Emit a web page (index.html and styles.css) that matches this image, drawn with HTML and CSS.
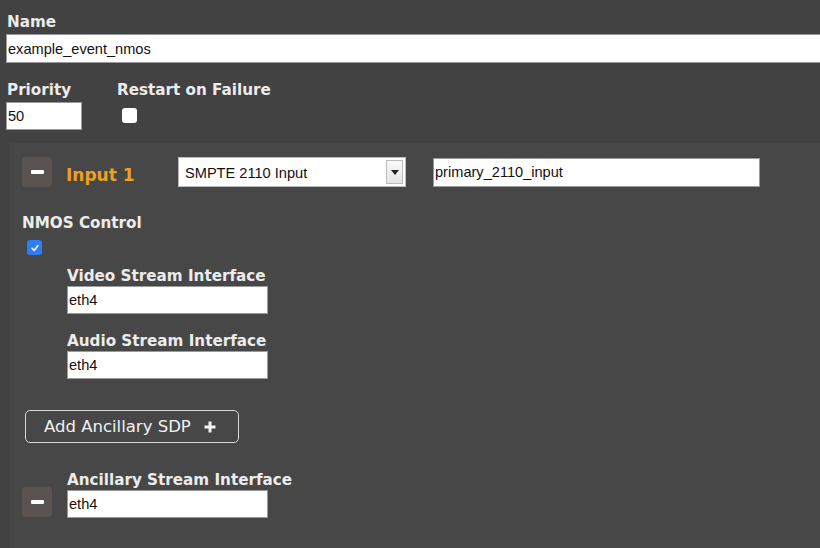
FILE: index.html
```html
<!DOCTYPE html>
<html>
<head>
<meta charset="utf-8">
<link rel="stylesheet" href="styles.css">
</head>
<body>
<div class="page">
  <div class="field">
    <label class="lbl">Name</label>
    <input class="txt name-input" type="text" value="example_event_nmos">
  </div>
  <div class="row2">
    <div class="field">
      <label class="lbl">Priority</label>
      <input class="txt prio-input" type="text" value="50">
    </div>
    <div class="field restart">
      <label class="lbl">Restart on Failure</label>
      <span class="cb"></span>
    </div>
  </div>
  <div class="panel">
    <div class="input-head">
      <button class="minus"><span></span></button>
      <span class="input-title">Input 1</span>
      <div class="select"><span class="sel-text">SMPTE 2110 Input</span><span class="sel-arrow"><svg width="8" height="5" viewBox="0 0 8 5"><path d="M0 0H8L4 5Z" fill="#222"/></svg></span></div>
      <input class="txt id-input" type="text" value="primary_2110_input">
    </div>
    <div class="nmos">
      <label class="lbl">NMOS Control</label>
      <span class="cb checked"><svg width="10" height="10" viewBox="0 0 10 10"><path d="M2 5.2L4.2 7.4L8 2.6" fill="none" stroke="#fff" stroke-width="1.6" stroke-linecap="round" stroke-linejoin="round"/></svg></span>
    </div>
    <div class="sub">
      <div class="field">
        <label class="lbl">Video Stream Interface</label>
        <input class="txt iface" type="text" value="eth4">
      </div>
      <div class="field">
        <label class="lbl">Audio Stream Interface</label>
        <input class="txt iface" type="text" value="eth4">
      </div>
    </div>
    <button class="add-btn">Add Ancillary SDP <svg class="plus" width="12" height="12" viewBox="0 0 12 12"><path d="M6 0.5V11.5M0.5 6H11.5" stroke="#f2f2f2" stroke-width="3"/></svg></button>
    <div class="anc">
      <button class="minus"><span></span></button>
      <div class="field">
        <label class="lbl">Ancillary Stream Interface</label>
        <input class="txt iface" type="text" value="eth4">
      </div>
    </div>
  </div>
</div>
</body>
</html>
```
FILE: styles.css
```css
html, body {
  margin: 0;
  padding: 0;
  background: #424242;
  overflow: hidden;
}
.page {
  width: 820px;
  height: 548px;
  padding-top: 13px;
  box-sizing: border-box;
}
.lbl {
  display: block;
  font-family: "DejaVu Sans", sans-serif;
  font-weight: bold;
  font-size: 15.2px;
  color: #ececec;
  line-height: 18px;
}
.field > .lbl { margin-bottom: 1px; }
.page > .field { padding-left: 7px; }
.txt {
  display: block;
  box-sizing: border-box;
  border: 1px solid #9a9a9a;
  background: #fff;
  font-family: "Liberation Sans", Arial, sans-serif;
  font-size: 14.6px;
  color: #111;
  padding: 0 0 0 1px;
  margin: 0;
  outline: none;
}
.name-input {
  width: 830px;
  height: 29px;
  margin-left: -1px;
  margin-top: 3px;
}
.row2 {
  display: flex;
  padding-left: 7px;
  margin-top: 18px;
}
.prio-input {
  width: 76px;
  height: 28px;
  margin-left: -1px;
  margin-top: 3px;
}
.restart { margin-left: 35px; }
.cb {
  display: block;
  width: 15px;
  height: 15px;
  border-radius: 3px;
  background: #fff;
  margin: 9px 0 0 5px;
  box-sizing: border-box;
}
.cb.checked {
  background: #2f7df6;
  display: flex;
  align-items: center;
  justify-content: center;
}
.panel {
  margin-left: 10px;
  margin-top: 13px;
  background: #474747;
  height: 420px;
  padding: 14px 0 0 12px;
  box-sizing: border-box;
}
.input-head {
  display: flex;
  align-items: center;
  height: 30px;
}
.minus {
  width: 30px;
  height: 30px;
  border: none;
  border-radius: 4px;
  background: #5a5350;
  display: flex;
  align-items: center;
  justify-content: center;
  padding: 0;
  flex: none;
}
.minus span {
  display: block;
  width: 13px;
  height: 4px;
  background: #fff;
  border-radius: 1px;
}
.input-title {
  font-family: "DejaVu Sans", sans-serif;
  font-weight: bold;
  font-size: 17px;
  color: #f0a020;
  margin-left: 14px;
  width: 112px;
  margin-top: 5px;
}
.select {
  width: 228px;
  height: 30px;
  box-sizing: border-box;
  background: #fff;
  border: 1px solid #bbb;
  display: flex;
  align-items: center;
  justify-content: space-between;
}
.sel-text {
  font-family: "Liberation Sans", Arial, sans-serif;
  font-size: 14.6px;
  color: #111;
  padding-left: 6px;
  margin-top: 2px;
}
.sel-arrow {
  width: 17px;
  height: 24px;
  margin-right: 2px;
  border: 1px solid #bbb;
  box-sizing: border-box;
  background: linear-gradient(#fafafa, #e4e4e4);
  display: flex;
  align-items: center;
  justify-content: center;
}
.id-input {
  width: 327px;
  height: 29px;
  margin-left: 27px;
}
.nmos {
  margin-top: 27px;
}
.nmos .cb {
  margin: 8px 0 0 5px;
}
.sub {
  padding-left: 45px;
  margin-top: 12px;
}
.sub .field + .field { margin-top: 18px; }
.iface {
  width: 201px;
  height: 28px;
}
.add-btn {
  display: flex;
  align-items: center;
  justify-content: flex-start;
  margin: 31px 0 0 3px;
  width: 214px;
  height: 33px;
  border: 1px solid #d8d8d8;
  border-radius: 5px;
  background: transparent;
  font-family: "DejaVu Sans", sans-serif;
  font-size: 16.5px;
  color: #f2f2f2;
  padding: 0 0 0 18px;
}
.plus {
  margin-left: 13px;
  margin-top: 1px;
}
.anc {
  display: flex;
  align-items: flex-end;
  margin-top: 28px;
}
.anc .minus { margin-bottom: 1px; }
.anc .field { margin-left: 15px; }
```
